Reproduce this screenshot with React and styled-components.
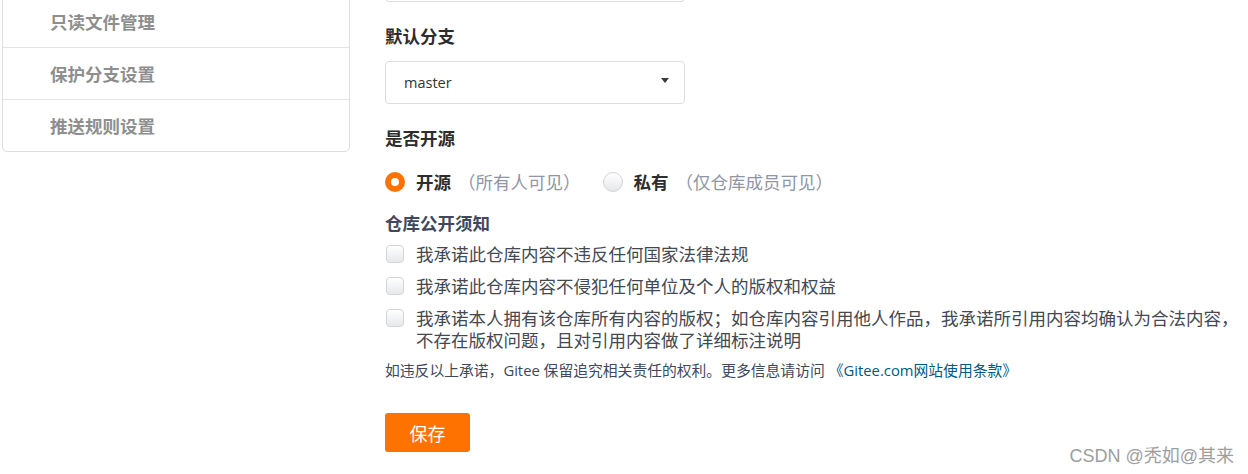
import React from 'react';
import styled, { createGlobalStyle } from 'styled-components';

const GlobalStyle = createGlobalStyle`
  body {
    margin: 0;
    background: #fff;
    font-family: "Open Sans", "Noto Sans CJK SC", sans-serif;
    color: #333;
    overflow: hidden;
  }
`;

const Page = styled.div`
  display: flex;
  align-items: flex-start;
  gap: 35px;
  padding-left: 2px;
  height: 474px;
  position: relative;
`;

const Sidebar = styled.div`
  width: 346px;
  margin-top: -5px;
  border: 1px solid #dedfe2;
  border-radius: 0 0 5px 5px;
  background: #fff;
`;

const MenuItem = styled.div`
  height: 51px;
  display: flex;
  align-items: center;
  padding-left: 47px;
  font-family: "Noto Sans CJK SC", sans-serif;
  font-size: 17.5px;
  font-weight: 700;
  color: #8e8e8e;
  & + & {
    border-top: 1px solid #e2e3e6;
  }
`;

const Main = styled.div`
  width: 862px;
  display: flex;
  flex-direction: column;
  align-items: flex-start;
`;

const TopInput = styled.div`
  width: 300px;
  height: 43px;
  box-sizing: border-box;
  margin-top: -41px;
  border: 1px solid #dcdde0;
  border-radius: 4px;
`;

const FieldLabel = styled.div`
  font-family: "Noto Sans CJK SC", sans-serif;
  font-size: 17.5px;
  font-weight: 700;
  line-height: 24px;
  color: ${p => p.$slate ? '#40485b' : '#2d2d2d'};
  margin-top: ${p => p.$top}px;
`;

const Select = styled.div`
  width: 300px;
  height: 43px;
  box-sizing: border-box;
  margin-top: 13px;
  border: 1px solid #dcdde0;
  border-radius: 4px;
  display: flex;
  align-items: center;
  justify-content: space-between;
  padding: 0 15px 0 18px;
  font-size: 14.5px;
  color: #333;
`;

const Caret = styled.span`
  width: 0;
  height: 0;
  border-left: 4px solid transparent;
  border-right: 4px solid transparent;
  border-top: 5px solid #3a3a3a;
  margin-top: -4px;
`;

const RadioRow = styled.div`
  display: flex;
  align-items: center;
  gap: 22px;
  margin-top: 20px;
  height: 24px;
`;

const RadioItem = styled.label`
  display: flex;
  align-items: center;
  font-family: "Noto Sans CJK SC", sans-serif;
  font-size: 17.5px;
  line-height: 24px;
`;

const RadioDot = styled.span`
  width: 20px;
  height: 20px;
  box-sizing: border-box;
  border-radius: 50%;
  margin-right: 11px;
  ${p => p.$checked
    ? 'border: 6px solid #fe7300; background: #fff;'
    : 'border: 1px solid #d4d4d6; background: linear-gradient(#fff, #e6e7ea);'}
`;

const RadioName = styled.span`
  font-weight: 700;
  color: #2d2d2d;
`;

const Hint = styled.span`
  color: #8f95a5;
  margin-left: 7px;
`;

const CheckList = styled.div`
  display: flex;
  flex-direction: column;
  gap: 10px;
  margin-top: 8px;
  width: 100%;
`;

const CheckRow = styled.label`
  display: flex;
  align-items: flex-start;
  font-family: "Noto Sans CJK SC", sans-serif;
  font-size: 17.5px;
  line-height: 22px;
  color: #444851;
`;

const Box = styled.span`
  flex: none;
  width: 18px;
  height: 18px;
  box-sizing: border-box;
  margin: 2px 12px 0 1px;
  border: 1px solid #d4d4d6;
  border-radius: 4px;
  background: linear-gradient(#fff, #e8e9ec);
`;

const Note = styled.div`
  margin-top: 9px;
  font-size: 14.8px;
  line-height: 20px;
  color: #40485b;
  font-family: "Open Sans", "Noto Sans CJK SC", sans-serif;
`;

const Link = styled.a`
  color: #005980;
  text-decoration: none;
  margin-left: 4px;
`;

const SaveButton = styled.button`
  margin-top: 33px;
  width: 85px;
  height: 39px;
  border: none;
  border-radius: 3px;
  background: #fe7300;
  color: #fff;
  font-family: "Noto Sans CJK SC", sans-serif;
  font-size: 18px;
  cursor: pointer;
`;

const Watermark = styled.div`
  position: absolute;
  right: 14px;
  bottom: 8px;
  font-family: "Liberation Sans", "Noto Sans CJK SC", sans-serif;
  font-size: 18px;
  line-height: 20px;
  color: #9e9e9e;
`;

const menu = ['只读文件管理', '保护分支设置', '推送规则设置'];

const pledges = [
  '我承诺此仓库内容不违反任何国家法律法规',
  '我承诺此仓库内容不侵犯任何单位及个人的版权和权益',
  '我承诺本人拥有该仓库所有内容的版权；如仓库内容引用他人作品，我承诺所引用内容均确认为合法内容，不存在版权问题，且对引用内容做了详细标注说明',
];

export default function App() {
  return (
    <>
      <GlobalStyle />
      <Page>
        <Sidebar>
          {menu.map(m => <MenuItem key={m}>{m}</MenuItem>)}
        </Sidebar>
        <Main>
          <TopInput />
          <FieldLabel $top={22}>默认分支</FieldLabel>
          <Select>
            <span>master</span>
            <Caret />
          </Select>
          <FieldLabel $top={22}>是否开源</FieldLabel>
          <RadioRow>
            <RadioItem>
              <RadioDot $checked />
              <RadioName>开源</RadioName>
              <Hint>（所有人可见）</Hint>
            </RadioItem>
            <RadioItem>
              <RadioDot />
              <RadioName>私有</RadioName>
              <Hint>（仅仓库成员可见）</Hint>
            </RadioItem>
          </RadioRow>
          <FieldLabel $top={17} $slate>仓库公开须知</FieldLabel>
          <CheckList>
            {pledges.map(p => (
              <CheckRow key={p}>
                <Box />
                <span>{p}</span>
              </CheckRow>
            ))}
          </CheckList>
          <Note>
            如违反以上承诺，Gitee 保留追究相关责任的权利。更多信息请访问
            <Link href="#">《Gitee.com网站使用条款》</Link>
          </Note>
          <SaveButton>保存</SaveButton>
        </Main>
        <Watermark>CSDN @秃如@其来</Watermark>
      </Page>
    </>
  );
}
